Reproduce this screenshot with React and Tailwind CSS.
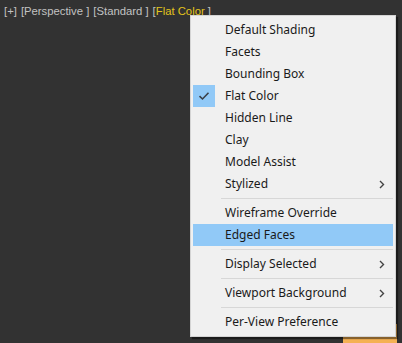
import React from "react";

const items = [
  { label: "Default Shading" },
  { label: "Facets" },
  { label: "Bounding Box" },
  { label: "Flat Color", checked: true },
  { label: "Hidden Line" },
  { label: "Clay" },
  { label: "Model Assist" },
  { label: "Stylized", sub: true },
  { sep: true },
  { label: "Wireframe Override" },
  { label: "Edged Faces", active: true },
  { sep: true },
  { label: "Display Selected", sub: true },
  { sep: true },
  { label: "Viewport Background", sub: true },
  { sep: true },
  { label: "Per-View Preference" },
];

const Check = () => (
  <svg width="12" height="10" viewBox="0 0 12 10" fill="none">
    <path d="M1.5 5.2 L4.5 8 L10.5 1.8" stroke="#3a3f47" strokeWidth="1.6" />
  </svg>
);

const Chevron = () => (
  <svg width="6" height="9" viewBox="0 0 6 9" fill="none">
    <path d="M1 1 L4.5 4.5 L1 8" stroke="#444" strokeWidth="1.4" />
  </svg>
);

export default function App() {
  return (
    <div
      className="relative w-[402px] h-[343px] bg-[#323232] overflow-hidden"
      style={{ fontFamily: '"Noto Sans", "Open Sans", sans-serif' }}
    >
      {/* Viewport label */}
      <div
        className="flex gap-[4px] pl-[4px] pt-[3px] text-[11.3px] leading-[17px] text-[#c2c2c2]"
        style={{ fontFamily: '"Liberation Sans", Arial, sans-serif' }}
      >
        <span>[+]</span>
        <span>[Perspective ]</span>
        <span>[Standard ]</span>
        <span>
          [<span className="text-[#e3c51c]">Flat Color</span> ]
        </span>
      </div>

      {/* Orange object behind menu */}
      <div className="absolute left-[343px] top-[324px] w-[54px] h-[19px] bg-[#f5b153]" />

      {/* Context menu */}
      <div className="absolute left-[190px] top-[15px] w-[206px] bg-[#f0f0f0] border border-[#d4d4d4] shadow-[2px_2px_1px_rgba(0,0,0,0.45)] py-[3px] text-[12px] text-[#1a1a1a]">
        {items.map((item, i) =>
          item.sep ? (
            <div key={i} className="ml-[30px] mr-[2px] my-[3px] h-px bg-[#d7d7d7]" />
          ) : (
            <div
              key={i}
              className={`flex items-center h-[22px] mx-[2px] ${
                item.active ? "bg-[#91c9f7]" : ""
              }`}
            >
              <div
                className={`w-[22px] h-[22px] flex items-center justify-center ${
                  item.checked ? "bg-[#91c9f7]" : ""
                }`}
              >
                {item.checked && <Check />}
              </div>
              <span className="ml-[10px] flex-1">{item.label}</span>
              {item.sub && (
                <span className="mr-[8px] flex items-center">
                  <Chevron />
                </span>
              )}
            </div>
          )
        )}
      </div>
    </div>
  );
}
